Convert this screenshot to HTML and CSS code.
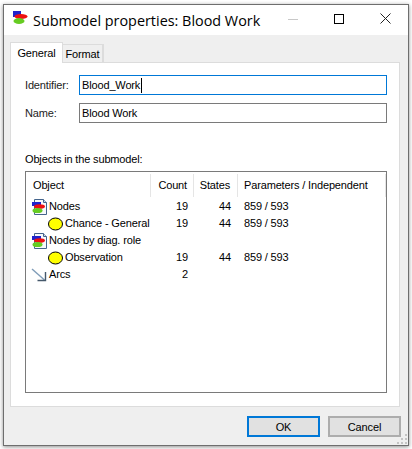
FILE: index.html
```html
<!DOCTYPE html>
<html>
<head>
  <title>Submodel properties: Blood Work</title>
  <link rel="stylesheet" href="styles.css">
</head>
<body>
  <svg class="defs" width="0" height="0">
    <symbol id="logo" viewBox="0 0 16 16">
      <rect x="1" y="0" width="8" height="6" fill="#2222cc"/>
      <ellipse cx="9" cy="5.5" rx="6.5" ry="2.6" fill="#ee1111"/>
      <ellipse cx="7" cy="10" rx="5.5" ry="3" fill="#66cc22"/>
    </symbol>
    <symbol id="doc" viewBox="0 0 16 16">
      <path d="M3.5 .5H12.5L15.5 3.5V15.5H3.5Z" fill="#f7f9fc" stroke="#44648c"/>
      <path d="M12.5 .5V3.5H15.5" fill="#cfdbe8" stroke="#44648c"/>
      <rect x="1" y="3" width="9" height="4" fill="#2222cc"/>
      <ellipse cx="8.5" cy="7.5" rx="5.5" ry="2.3" fill="#ee1111"/>
      <ellipse cx="6.5" cy="11.5" rx="5" ry="2.6" fill="#66cc22"/>
    </symbol>
    <symbol id="chance" viewBox="0 0 16 16">
      <ellipse cx="8.5" cy="8" rx="7" ry="6" fill="#ffff00" stroke="#000"/>
    </symbol>
    <symbol id="arc" viewBox="0 0 16 16">
      <path d="M1 2L13.5 13" fill="none" stroke="#7f9cb8" stroke-width="1.4"/>
      <path d="M14.5 5V13.5H6.5" fill="none" stroke="#45586b" stroke-width="1.4"/>
    </symbol>
  </svg>

  <div class="window">
    <div class="titleBar">
      <svg class="titleIcon"><use href="#logo"/></svg>
      <div class="titleText">Submodel properties: Blood Work</div>
      <div class="captionButton">
        <svg width="10" height="10"><path d="M0 5.5H10" stroke="#c8c8c8"/></svg>
      </div>
      <div class="captionButton">
        <svg width="10" height="10"><rect x=".5" y=".5" width="9" height="9" fill="none" stroke="#000"/></svg>
      </div>
      <div class="captionButton">
        <svg width="11" height="11"><path d="M.5 .5L10.5 10.5M10.5 .5L.5 10.5" stroke="#222"/></svg>
      </div>
    </div>

    <div class="content">
      <div class="tabs">
        <div class="tab activeTab">General</div>
        <div class="tab">Format</div>
      </div>

      <div class="panel">
        <div class="field">
          <div class="fieldLabel">Identifier:</div>
          <div class="textInput focused">Blood_Work<span class="caret"></span></div>
        </div>
        <div class="field">
          <div class="fieldLabel">Name:</div>
          <div class="textInput">Blood Work</div>
        </div>

        <div class="listLabel">Objects in the submodel:</div>
        <div class="list">
          <div class="row headerRow">
            <div class="cell">Object</div>
            <div class="cell number countCell">Count</div>
            <div class="cell number">States</div>
            <div class="cell params">Parameters / Independent</div>
          </div>
          <div class="row">
            <div class="cell"><svg class="rowIcon"><use href="#doc"/></svg>Nodes</div>
            <div class="cell number countCell">19</div>
            <div class="cell number">44</div>
            <div class="cell params">859 / 593</div>
          </div>
          <div class="row">
            <div class="cell indent"><svg class="rowIcon"><use href="#chance"/></svg>Chance - General</div>
            <div class="cell number countCell">19</div>
            <div class="cell number">44</div>
            <div class="cell params">859 / 593</div>
          </div>
          <div class="row">
            <div class="cell"><svg class="rowIcon"><use href="#doc"/></svg>Nodes by diag. role</div>
          </div>
          <div class="row">
            <div class="cell indent"><svg class="rowIcon"><use href="#chance"/></svg>Observation</div>
            <div class="cell number countCell">19</div>
            <div class="cell number">44</div>
            <div class="cell params">859 / 593</div>
          </div>
          <div class="row">
            <div class="cell"><svg class="rowIcon"><use href="#arc"/></svg>Arcs</div>
            <div class="cell number countCell">2</div>
          </div>
        </div>
      </div>

      <div class="buttons">
        <button class="dialogButton defaultButton">OK</button>
        <button class="dialogButton">Cancel</button>
      </div>
      <svg class="grip" width="11" height="11">
        <path d="M8 0h2v2H8zM4 4h2v2H4zM8 4h2v2H8zM0 8h2v2H0zM4 8h2v2H4zM8 8h2v2H8z" fill="#c4c4c4"/>
      </svg>
    </div>
  </div>
</body>
</html>
```

FILE: styles.css
```css
html, body {
  margin: 0;
  height: 100%;
  background-color: #ffffff;
}

body {
  padding: 4px 3px 0 3px;
  box-sizing: border-box;
  font-family: "Liberation Sans", Arial, sans-serif;
  font-size: 11px;
  letter-spacing: -0.15px;
  color: #000;
  overflow: hidden;
}

.defs {
  display: block;
  height: 0;
}

.window {
  position: relative;
  width: 406px;
  height: 442px;
  box-sizing: border-box;
  border: 1px solid #6e6e6e;
  box-shadow: 0 1px 4px rgba(0, 0, 0, 0.45);
  background-color: #efefef;
  display: flex;
  flex-direction: column;
}

.titleBar {
  height: 30px;
  flex: none;
  background-color: #ffffff;
  display: flex;
  align-items: center;
  padding-left: 8px;
}

.titleIcon {
  width: 16px;
  height: 16px;
  margin: 0 5px 0 0;
  position: relative;
  top: -1px;
}

.titleText {
  flex: 1;
  font-family: "Open Sans", "Noto Sans", sans-serif;
  font-size: 14.4px;
  letter-spacing: 0;
  color: #000;
}

.captionButton {
  width: 46px;
  height: 30px;
  display: flex;
  align-items: center;
  justify-content: center;
  padding-bottom: 3px;
  box-sizing: border-box;
}

.content {
  flex: 1;
  padding: 7px 8px 0 6px;
  display: flex;
  flex-direction: column;
}

.tabs {
  display: flex;
  align-items: flex-end;
  height: 20px;
  position: relative;
  z-index: 1;
}

.tab {
  width: 39px;
  height: 17px;
  line-height: 18px;
  text-align: center;
  border: 2px solid #dcdcdc;
  border-bottom: none;
  border-left: none;
  border-top-width: 1px;
  background-color: #efefef;
}

.activeTab {
  width: 51px;
  height: 20px;
  line-height: 20px;
  margin-bottom: -1px;
  background-color: #ffffff;
  border: 1px solid #dcdcdc;
  border-bottom: none;
}

.panel {
  height: 345px;
  box-sizing: border-box;
  border: 1px solid #dcdcdc;
  background-color: #ffffff;
  padding: 12px 12px 0 14px;
}

.field {
  display: flex;
  align-items: center;
  margin-bottom: 8px;
}

.fieldLabel {
  width: 54px;
  flex: none;
  color: #222;
}

.textInput {
  flex: 1;
  height: 20px;
  line-height: 18px;
  box-sizing: border-box;
  border: 1px solid #7a7a7a;
  padding-left: 2px;
  display: flex;
  align-items: center;
}

.focused {
  border-color: #0078d7;
}

.caret {
  display: inline-block;
  width: 1px;
  height: 15px;
  margin-left: 1px;
  background-color: #000;
}

.listLabel {
  margin-top: 29px;
  height: 14px;
  line-height: 14px;
  margin-bottom: 5px;
}

.list {
  height: 222px;
  box-sizing: border-box;
  border: 1px solid #7a7a7a;
  background-color: #ffffff;
}

.row {
  display: grid;
  grid-template-columns: 125px 43px 44px 148px;
  height: 17px;
  line-height: 17px;
}

.headerRow {
  height: 23px;
  line-height: 23px;
  margin: 2px 0 1px 0;
}

.headerRow .cell {
  border-right: 1px solid #e5e5e5;
  box-sizing: border-box;
}

.cell {
  padding-left: 7px;
  white-space: nowrap;
  display: flex;
  align-items: center;
}

.number {
  justify-content: flex-end;
  padding: 0 7px 0 0;
}

.countCell {
  padding-right: 6px;
}

.row .params {
  padding-left: 6px;
}

.indent {
  padding-left: 23px;
}

.rowIcon {
  width: 16px;
  height: 16px;
  flex: none;
  margin-left: -2px;
  margin-right: 2px;
}

.buttons {
  display: flex;
  justify-content: flex-end;
  gap: 8px;
  padding: 9px 0 0 0;
  margin-right: -1px;
}

.dialogButton {
  width: 73px;
  height: 21px;
  box-sizing: border-box;
  border: 2px solid #adadad;
  background-color: #e1e1e1;
  font-family: "Liberation Sans", Arial, sans-serif;
  font-size: 11px;
  letter-spacing: -0.15px;
  padding: 0;
  color: #000;
}

.defaultButton {
  border: 2px solid #0078d7;
}

.grip {
  position: absolute;
  right: 0;
  bottom: 0;
}
```
